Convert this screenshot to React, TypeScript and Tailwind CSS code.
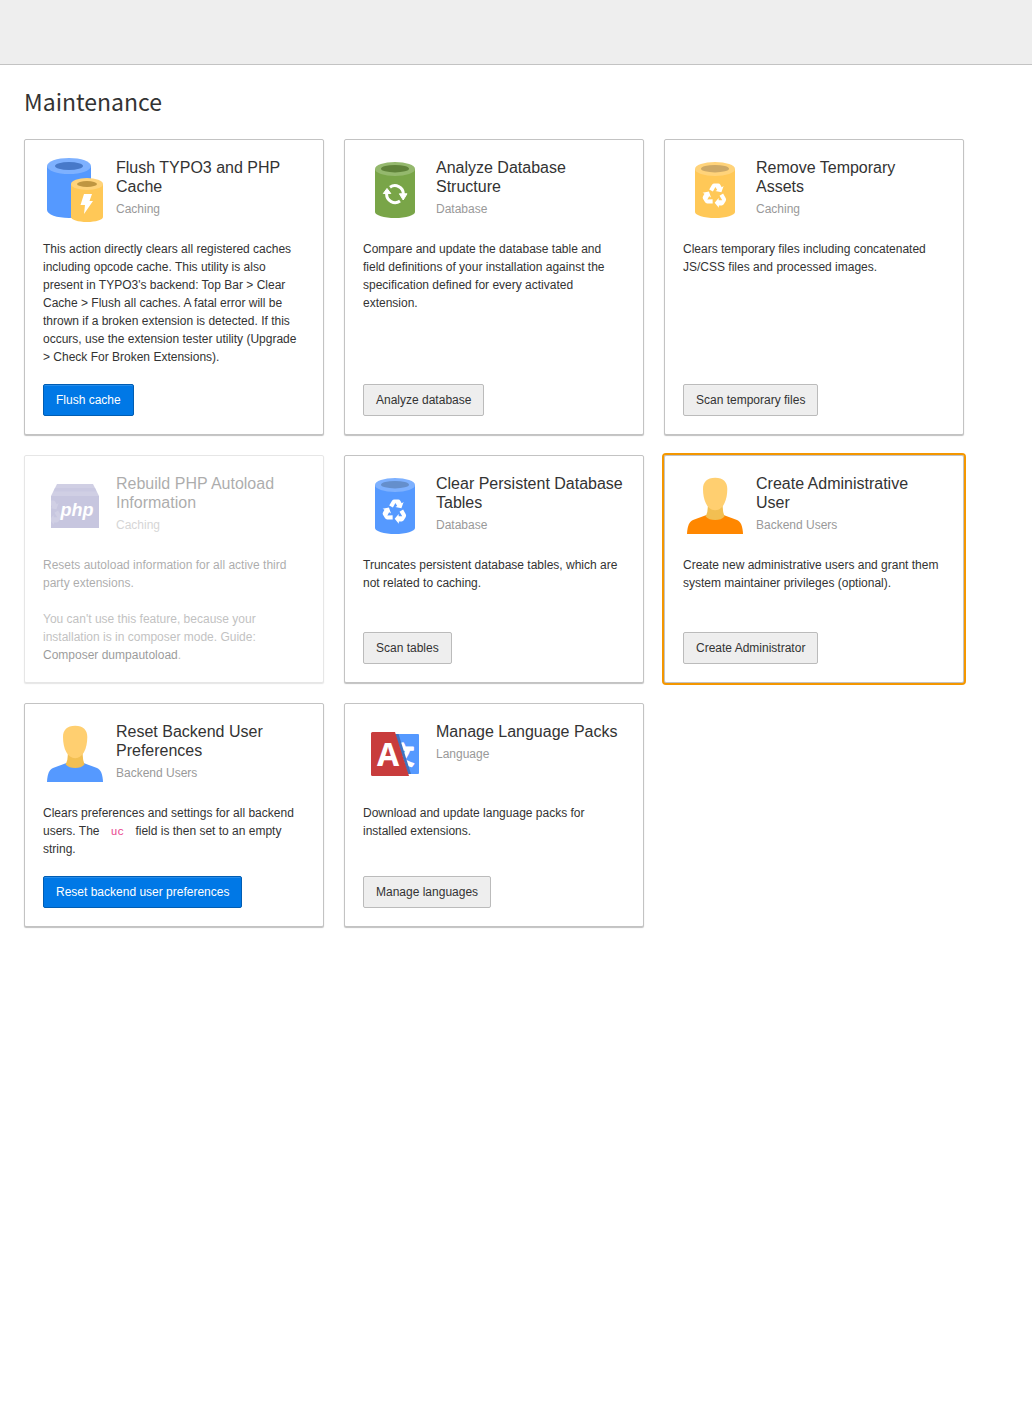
import type { ReactNode } from "react";

function Icon({ children }: { children: ReactNode }) {
  return (
    <svg viewBox="0 0 64 64" className="size-16 shrink-0" aria-hidden="true">
      {children}
    </svg>
  );
}

type CylinderProps = { body: string; rim: string; hole: string; children?: ReactNode };

function Cylinder({ body, rim, hole, children }: CylinderProps) {
  return (
    <Icon>
      <path fill={body} d="M12 11v43c0 3.300 9 6 20 6s20-2.700 20-6V11z" />
      <ellipse fill={rim} cx="32" cy="11" rx="20" ry="7" />
      <ellipse fill={hole} cx="32" cy="10.700" rx="14" ry="3.700" />
      {children}
    </Icon>
  );
}

const recycleArm =
  "M26.200 31.500L29 26.800Q29.800 25.500 31.300 25.500H35.300Q36.600 25.500 37.300 26.800L38.700 29.200L40.600 28.100L38.400 34.200L32.300 33.100L34.200 32L32.400 28.900L29.900 33.500z";

function RecycleMark({ color = "#fff" }: { color?: string }) {
  return (
    <g fill={color}>
      <path d={recycleArm} />
      <path d={recycleArm} transform="rotate(120 32 37.500)" />
      <path d={recycleArm} transform="rotate(240 32 37.500)" />
    </g>
  );
}

function CacheIcon() {
  return (
    <Icon>
      <path fill="#5599ff" d="M4 8v44c0 4.400 9.800 8 22 8s22-3.600 22-8V8z" />
      <ellipse fill="#7eb1ff" cx="26" cy="8" rx="22" ry="8" />
      <ellipse fill="#4779c9" cx="26" cy="8" rx="14" ry="4" />
      <path fill="#ffc857" d="M28 26v33c0 2.800 7.200 5 16 5s16-2.200 16-5V26z" />
      <ellipse fill="#ffd37a" cx="44" cy="26" rx="16" ry="6" />
      <ellipse fill="#bf9641" cx="44" cy="26" rx="10" ry="3" />
      <path fill="#fff" d="M41 36h8l-2.500 7H50L41 56l1-9h-4.500z" />
    </Icon>
  );
}

function DatabaseIcon() {
  return (
    <Cylinder body="#79a548" rim="#94b86d" hole="#5f8239">
      <g fill="none" stroke="#fff" strokeWidth="3">
        <path d="M27 29.200A8.500 8.500 0 0 1 40.400 36" />
        <path d="M37 43A8.500 8.500 0 0 1 23.600 36" />
      </g>
      <path fill="#fff" stroke="#fff" strokeLinejoin="round" d="M24 30.500l3.800 5H20.300zM40.200 42l3.800-6.200h-7.600z" />
    </Cylinder>
  );
}

function TemporaryIcon() {
  return (
    <Cylinder body="#ffc857" rim="#ffd37a" hole="#cca866">
      <RecycleMark />
    </Cylinder>
  );
}

function TablesIcon() {
  return (
    <Cylinder body="#5599ff" rim="#7eb1ff" hole="#658fcc">
      <RecycleMark />
    </Cylinder>
  );
}

function PhpIcon() {
  return (
    <Icon>
      <path fill="#7573b1" d="M8 22h48v32H8z" />
      <path fill="#8b89be" d="M14 10h36l6 12H8z" />
      <path fill="#7c7ab5" d="M12 14h40l1.500 3.500h-43z" />
      <svg x="8" y="22" width="24" height="32" viewBox="8 22 24 32">
        <g transform="translate(-25 1)">
          <RecycleMark color="#8b89be" />
        </g>
      </svg>
      <text x="34" y="42" textAnchor="middle" fill="#fff" className="font-['Liberation_Sans',sans-serif] text-[18px] font-bold italic">
        php
      </text>
    </Icon>
  );
}

function UserIcon({ shirt }: { shirt: string }) {
  return (
    <Icon>
      <path fill={shirt} d="M4 60c.300-8 2.300-12.500 6-14l13.500-5h17L54 46c3.700 1.500 5.700 6 6 14z" />
      <path fill="#f2bf52" d="M25 31h14.500l.700 7 1.300 4.500C39.500 45 36 46 32.200 46S24.500 45 22.700 42.500L24.300 38z" />
      <path fill="#ffcf70" d="M32.200 3.700C24 3.700 20 8 20 15c0 12 4.700 21.200 12.200 21.200S44.300 27 44.300 15c0-7-4-11.300-12.100-11.300z" />
    </Icon>
  );
}

function LanguageIcon() {
  return (
    <Icon>
      <path fill="#5599ff" d="M30 12h25a1 1 0 0 1 1 1v38a1 1 0 0 1-1 1H30z" />
      <text x="39" y="42" textAnchor="middle" fill="#fff" stroke="#fff" strokeWidth="1.500" strokeLinejoin="round" className="font-['Noto_Sans_CJK_SC',sans-serif] text-[24px] font-bold">
        文
      </text>
      <path fill="#3f72bf" d="M32 12h3.500L48 52h-3z" />
      <path fill="#c83c3c" d="M9.500 10H32l14 44H9.500A1.500 1.500 0 0 1 8 52.500v-41A1.500 1.500 0 0 1 9.500 10z" />
      <text x="25" y="44" textAnchor="middle" fill="#fff" className="font-['Noto_Sans',sans-serif] text-[32px] font-bold">
        A
      </text>
    </Icon>
  );
}

type CardProps = {
  icon: ReactNode;
  title: string;
  category: string;
  action?: string;
  primary?: boolean;
  highlighted?: boolean;
  disabled?: boolean;
  children: ReactNode;
};

function Card({ icon, title, category, action, primary, highlighted, disabled, children }: CardProps) {
  return (
    <article
      className={`flex flex-col gap-[18px] rounded-xs border border-[#c3c3c3] bg-white p-[18px] shadow-[0_1px_1px_rgba(0,0,0,0.25)] ${
        highlighted ? "outline-2 outline-[#f49700]" : ""
      } ${disabled ? "opacity-40" : ""}`}
    >
      <header className="flex min-h-16 gap-[9px]">
        {icon}
        <div>
          <h2 className="text-base leading-[19px]">{title}</h2>
          <p className="mt-1 text-[#999]">{category}</p>
        </div>
      </header>
      <div className="grow">{children}</div>
      {action && (
        <button
          type="button"
          className={`h-8 self-start rounded-xs border px-3 leading-[18px] ${
            primary
              ? "border-[#005db3] bg-[#0078e6] text-white shadow-[inset_0_1px_0_rgba(255,255,255,0.15)]"
              : "border-[#bbb] bg-[#eee] shadow-[inset_0_1px_0_rgba(255,255,255,0.15)]"
          }`}
        >
          {action}
        </button>
      )}
    </article>
  );
}

export default function App() {
  return (
    <div className="min-h-screen bg-white font-['Liberation_Sans',Arial,sans-serif] text-xs leading-[18px] text-[#333]">
      <div className="h-[65px] border-b border-[#c3c3c3] bg-[#eee]" />
      <main className="px-6 pt-5 pb-6">
        <h1 className="mb-[22px] font-['Noto_Sans_CJK_SC',sans-serif] text-[23px] leading-8">Maintenance</h1>
        <div className="grid grid-cols-[repeat(auto-fill,300px)] gap-5">
          <Card icon={<CacheIcon />} title="Flush TYPO3 and PHP Cache" category="Caching" action="Flush cache" primary>
            This action directly clears all registered caches including opcode cache. This utility is also present in
            TYPO3's backend: Top Bar &gt; Clear Cache &gt; Flush all caches. A fatal error will be thrown if a broken
            extension is detected. If this occurs, use the extension tester utility (Upgrade &gt; Check For Broken
            Extensions).
          </Card>
          <Card icon={<DatabaseIcon />} title="Analyze Database Structure" category="Database" action="Analyze database">
            Compare and update the database table and field definitions of your installation against the specification
            defined for every activated extension.
          </Card>
          <Card icon={<TemporaryIcon />} title="Remove Temporary Assets" category="Caching" action="Scan temporary files">
            Clears temporary files including concatenated JS/CSS files and processed images.
          </Card>
          <Card icon={<PhpIcon />} title="Rebuild PHP Autoload Information" category="Caching" disabled>
            <p className="mb-[18px]">Resets autoload information for all active third party extensions.</p>
            <p className="text-[#666]">
              You can't use this feature, because your installation is in composer mode. Guide:{" "}
              <a href="#composer" className="text-black">
                Composer dumpautoload
              </a>
              .
            </p>
          </Card>
          <Card icon={<TablesIcon />} title="Clear Persistent Database Tables" category="Database" action="Scan tables">
            Truncates persistent database tables, which are not related to caching.
          </Card>
          <Card
            icon={<UserIcon shirt="#ff8700" />}
            title="Create Administrative User"
            category="Backend Users"
            action="Create Administrator"
            highlighted
          >
            Create new administrative users and grant them system maintainer privileges (optional).
          </Card>
          <Card
            icon={<UserIcon shirt="#5599ff" />}
            title="Reset Backend User Preferences"
            category="Backend Users"
            action="Reset backend user preferences"
            primary
          >
            Clears preferences and settings for all backend users. The{" "}
            <code className="px-2 font-['Liberation_Mono',monospace] text-[11px] leading-none text-[#e83e8c]">uc</code>{" "}
            field is then set to an empty string.
          </Card>
          <Card icon={<LanguageIcon />} title="Manage Language Packs" category="Language" action="Manage languages">
            Download and update language packs for installed extensions.
          </Card>
        </div>
      </main>
    </div>
  );
}
